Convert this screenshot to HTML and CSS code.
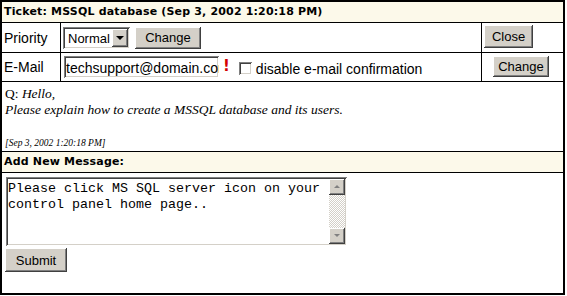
FILE: index.html
```html
<!DOCTYPE html>
<html lang="en">

<head>
    <meta charset="UTF-8">
    <title>Ticket: MSSQL database</title>
    <link rel="stylesheet" href="styles.css">
</head>

<body>

    <div class="ticket">

        <div class="titel">Ticket: MSSQL database (Sep 3, 2002 1:20:18 PM)</div>

        <div class="linje linje_prio">
            <div class="label">Priority</div>
            <div class="felt">
                <div class="vaelg">
                    <span class="vaelg_tekst">Normal</span>
                    <span class="pil"></span>
                </div>
                <button class="knap knap_change">Change</button>
            </div>
            <div class="handling">
                <button class="knap knap_close">Close</button>
            </div>
        </div>

        <div class="linje linje_mail">
            <div class="label">E-Mail</div>
            <div class="felt">
                <input class="mail" type="text" value="techsupport@domain.com">
                <span class="udraab">!</span>
                <span class="boks"></span>
                <span class="boks_tekst">disable e-mail confirmation</span>
            </div>
            <div class="handling midt">
                <button class="knap knap_change2">Change</button>
            </div>
        </div>

        <div class="besked">
            Q: <i>Hello,</i><br>
            <i>Please explain how to create a MSSQL database and its users.</i><br>
            <br>
            <i class="dato">[Sep 3, 2002 1:20:18 PM]</i>
        </div>

        <div class="titel">Add New Message:</div>

        <div class="svar">
            <div class="tekstfelt">
                <textarea class="svar_tekst">Please click MS SQL server icon on your control panel home page..</textarea>
                <div class="rulle">
                    <span class="rulle_knap op"></span>
                    <span class="rulle_spor"></span>
                    <span class="rulle_knap ned"></span>
                </div>
            </div>
            <button class="knap knap_submit">Submit</button>
        </div>

    </div>

</body>

</html>
```

FILE: styles.css
```css
body {
    margin: 0;
    font-family: 'Liberation Sans', Arial, sans-serif;
    font-size: 14px;
    color: #000;
    background: #fff;
}

.ticket {
    width: 565px;
    height: 295px;
    box-sizing: border-box;
    border: 2px solid #000;
    display: flex;
    flex-direction: column;
}


/* TITLER */

.titel {
    height: 20px;
    line-height: 20px;
    padding-left: 2px;
    background-color: #fcf9ea;
    border-bottom: 1px solid #000;
    font-family: 'DejaVu Sans', Verdana, sans-serif;
    font-size: 11px;
    font-weight: bold;
    letter-spacing: 0.17px;
}


/* LINJER */

.linje {
    display: grid;
    grid-template-columns: 58px 1fr 82px;
    border-bottom: 1px solid #000;
}

.linje_prio {
    height: 29px;
}

.linje_mail {
    height: 28px;
}

.label {
    padding-left: 2px;
    display: flex;
    align-items: center;
}

.felt {
    border-left: 1px solid #000;
    display: flex;
    align-items: center;
    padding-left: 2px;
}

.handling {
    border-left: 1px solid #000;
    display: flex;
    align-items: center;
    padding-left: 2px;
}

.midt {
    justify-content: center;
    padding-left: 0;
}


/* KONTROLLER */

.knap {
    font-family: 'Liberation Sans', Arial, sans-serif;
    font-size: 13px;
    background-color: #d4d0c8;
    color: #000;
    border: none;
    padding: 0;
    box-shadow: inset -1px -1px #404040, inset 1px 1px #fff, inset -2px -2px #808080, inset 2px 2px #d4d0c8;
}

.knap_change {
    width: 66px;
    height: 22px;
    margin-left: 5px;
}

.knap_close {
    width: 49px;
    height: 23px;
    margin-top: -3px;
}

.knap_change2 {
    width: 56px;
    height: 21px;
    margin: -2px 0 0 -3px;
}

.knap_submit {
    width: 62px;
    height: 24px;
    margin: 2px 0 0 -1px;
}

.vaelg {
    width: 67px;
    height: 22px;
    box-sizing: border-box;
    display: flex;
    align-items: center;
    background: #fff;
    box-shadow: inset 1px 1px #808080, inset -1px -1px #fff, inset 2px 2px #404040, inset -2px -2px #d4d0c8;
    padding: 2px;
    font-size: 13px;
}

.vaelg_tekst {
    flex: 1;
    padding-left: 3px;
    margin-top: 2px;
}

.pil {
    width: 16px;
    height: 18px;
    position: relative;
    background-color: #d4d0c8;
    box-shadow: inset -1px -1px #404040, inset 1px 1px #fff, inset -2px -2px #808080;
}

.pil::after {
    content: "";
    position: absolute;
    left: 4px;
    top: 7px;
    border-left: 4px solid transparent;
    border-right: 4px solid transparent;
    border-top: 4px solid #000;
}

.mail {
    width: 155px;
    height: 22px;
    box-sizing: border-box;
    margin: 0 0 0 1px;
    padding: 2px 0 0 2px;
    border: none;
    font-family: 'Liberation Sans', Arial, sans-serif;
    font-size: 14px;
    box-shadow: inset 1px 1px #808080, inset -1px -1px #fff, inset 2px 2px #404040, inset -2px -2px #d4d0c8;
}

.udraab {
    color: #d40000;
    font-family: 'DejaVu Sans', Verdana, sans-serif;
    font-weight: bold;
    font-size: 15px;
    margin-left: 4px;
    margin-top: -3px;
}

.boks {
    width: 13px;
    height: 13px;
    box-sizing: border-box;
    margin: 2px 0 0 9px;
    background: #fff;
    box-shadow: inset 1px 1px #808080, inset -1px -1px #fff, inset 2px 2px #404040, inset -2px -2px #d4d0c8;
}

.boks_tekst {
    margin: 3px 0 0 4px;
}


/* BESKED */

.besked {
    height: 65px;
    padding: 4px 0 0 3px;
    border-bottom: 1px solid #000;
    font-family: 'Liberation Serif', 'Times New Roman', serif;
    font-size: 13.5px;
    line-height: 16px;
}

.dato {
    font-size: 9.5px;
}


/* SVAR */

.svar {
    flex: 1;
    padding: 4px 0 0 4px;
}

.tekstfelt {
    width: 341px;
    height: 69px;
    box-sizing: border-box;
    display: flex;
    padding: 2px;
    background: #fff;
    box-shadow: inset 1px 1px #808080, inset -1px -1px #fff, inset 2px 2px #404040, inset -2px -2px #d4d0c8;
}

.svar_tekst {
    flex: 1;
    border: none;
    resize: none;
    overflow: hidden;
    padding: 2px 0 0 0;
    margin: 0;
    font-family: 'Liberation Mono', 'Courier New', monospace;
    font-size: 13.33px;
    line-height: 16px;
    outline: none;
}

.rulle {
    width: 16px;
    display: flex;
    flex-direction: column;
}

.rulle_knap {
    height: 16px;
    position: relative;
    background-color: #d4d0c8;
    box-shadow: inset -1px -1px #404040, inset 1px 1px #fff, inset -2px -2px #808080;
}

.rulle_knap::after {
    content: "";
    position: absolute;
    left: 5px;
    top: 6px;
    border-left: 3px solid transparent;
    border-right: 3px solid transparent;
}

.op::after {
    border-bottom: 3px solid #808080;
}

.ned::after {
    border-top: 3px solid #808080;
}

.rulle_spor {
    flex: 1;
    background-color: #fff;
    background-image: repeating-conic-gradient(#d4d0c8 0 25%, #fff 0 50%);
    background-size: 2px 2px;
}
```
